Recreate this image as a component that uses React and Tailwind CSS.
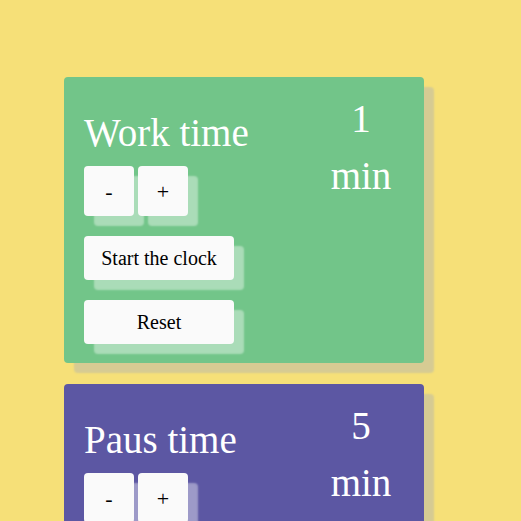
const fontStack = { fontFamily: '"Liberation Serif", "DejaVu Serif", serif' };

const Btn = ({ children, className = "" }) => (
  <button
    className={`bg-[#fafafa] rounded text-black shadow-[10px_10px_2px_rgba(255,255,255,0.4)] ${className}`}
  >
    {children}
  </button>
);

const TimerCard = ({ title, value, bg, withActions }) => (
  <div
    className={`w-[360px] rounded ${bg} px-5 pt-[13px] pb-[19px] flex justify-between shadow-[10px_10px_2px_#d6cb93]`}
  >
    <div className="flex flex-col">
      <h2 className="mt-[23px] text-[39px] leading-[40px] text-white">{title}</h2>
      <div className="mt-[13px] flex gap-1">
        <Btn className="w-[50px] h-[50px] text-[22px]">-</Btn>
        <Btn className="w-[50px] h-[50px] text-[22px]">+</Btn>
      </div>
      {withActions && (
        <div className="mt-5 flex flex-col gap-5">
          <Btn className="w-[150px] h-[44px] text-[20px]">Start the clock</Btn>
          <Btn className="w-[150px] h-[44px] text-[20px]">Reset</Btn>
        </div>
      )}
    </div>
    <div className="w-[86px] text-center text-white text-[39px] leading-[57px]">
      <div>{value}</div>
      <div>min</div>
    </div>
  </div>
);

export default function App() {
  return (
    <div className="min-h-[521px] bg-[#f6e078] pl-16 pt-[77px] pb-10 flex flex-col gap-[21px]" style={fontStack}>
      <TimerCard title="Work time" value="1" bg="bg-[#72c589]" withActions />
      <TimerCard title="Paus time" value="5" bg="bg-[#5c57a3]" withActions />
    </div>
  );
}
